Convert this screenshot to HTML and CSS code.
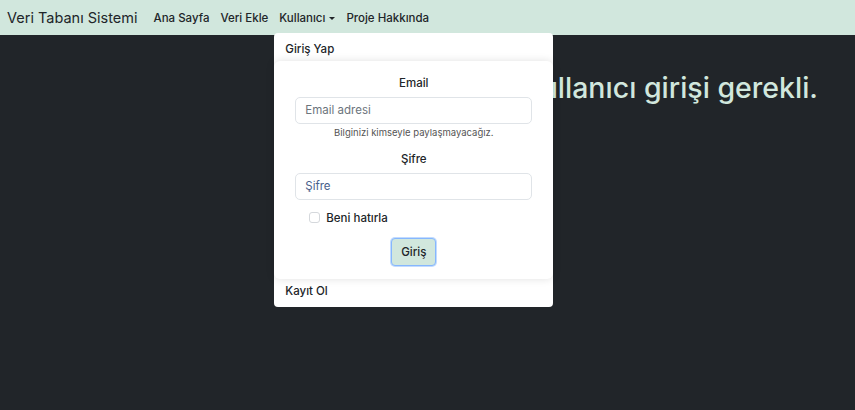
FILE: index.html
```html
<!DOCTYPE html>
<html lang="tr">
<head>
<meta charset="utf-8">
<link rel="stylesheet" href="styles.css">
</head>
<body>
<nav class="navbar">
  <span class="brand">Veri Tabanı Sistemi</span>
  <ul class="nav">
    <li>Ana Sayfa</li>
    <li>Veri Ekle</li>
    <li class="dd-toggle">Kullanıcı<span class="caret"></span>
      <div class="dropdown">
        <div class="dd-item">Giriş Yap</div>
        <form class="login">
          <label class="lbl">Email</label>
          <div class="input"><span class="ph">Email adresi</span></div>
          <div class="help">Bilginizi kimseyle paylaşmayacağız.</div>
          <label class="lbl lbl2">Şifre</label>
          <div class="input"><span class="ph ph-blue">Şifre</span></div>
          <div class="check"><span class="box"></span><span>Beni hatırla</span></div>
          <div class="btn-row"><button type="button" class="btn">Giriş</button></div>
        </form>
        <div class="dd-item dd-last">Kayıt Ol</div>
      </div>
    </li>
    <li>Proje Hakkında</li>
  </ul>
</nav>
<main class="main">
  <h1 class="title">Kullanıcı girişi gerekli.</h1>
</main>
</body>
</html>
```
FILE: styles.css
```css
* { box-sizing: border-box; }
html, body { margin: 0; height: 100%; }
body {
  background: #212529;
  font-family: "Inter", "Open Sans", sans-serif;
  color: #212529;
}
.navbar {
  height: 35px;
  background: #d1e7dd;
  display: flex;
  align-items: center;
  padding: 0 7px;
}
.brand { font-size: 14.5px; margin-right: 16px; color: #212529; }
.nav { list-style: none; margin: 0; padding: 0; display: flex; gap: 11px; font-size: 11.5px; font-weight: 500; }
.nav li { position: relative; }
.caret {
  display: inline-block; margin-left: 4px; vertical-align: 2px;
  border-left: 3px solid transparent; border-right: 3px solid transparent; border-top: 3px solid #212529;
}
.dropdown {
  position: absolute; top: 22px; left: -5px; width: 279px;
  background: #fff; border-radius: 4px; z-index: 5;
  padding-top: 6px; font-weight: 400;
}
.dd-item { padding: 3px 11px 4px; font-size: 11.5px; height: 22px; font-weight: 500; }
.dd-last { height: auto; padding: 5px 11px 9px; }
.login {
  display: flex; flex-direction: column; align-items: center;
  box-shadow: 0 0 8px rgba(0,0,0,0.12);
  border-radius: 6px; padding: 15px 21px 13px; margin: 0;
}
.lbl { font-size: 11.5px; margin-bottom: 7px; font-weight: 500; }
.lbl2 { margin-top: 14px; }
.input {
  width: 100%; height: 27px; border: 1px solid #e0e4e8; border-radius: 5px;
  display: flex; align-items: center; padding: 0 9px; font-size: 11.5px;
}
.ph { color: #6c757d; }
.ph-blue { color: #495f8c; }
.help { font-size: 9.5px; color: #555; margin-top: 3px; }
.check { align-self: flex-start; margin-left: 14px; margin-top: 11px; display: flex; align-items: center; gap: 6px; font-size: 11.5px; font-weight: 500; }
.box { width: 11px; height: 11px; border: 1px solid #d5d8dc; border-radius: 3px; }
.btn-row { margin-top: 13px; }
.btn {
  font: inherit; font-size: 11.5px; font-weight: 500; background: #d1e7dd; color: #212529;
  border: 1px solid #86b7fe; box-shadow: 0 0 0 1px rgba(13,110,253,0.25);
  border-radius: 4px; height: 28px; padding: 0 9px;
}
.main { display: flex; justify-content: flex-end; padding-right: 37px; }
.title { margin: 35px 0 0; font-size: 28.5px; font-weight: 500; color: #d1e7dd; }
```
